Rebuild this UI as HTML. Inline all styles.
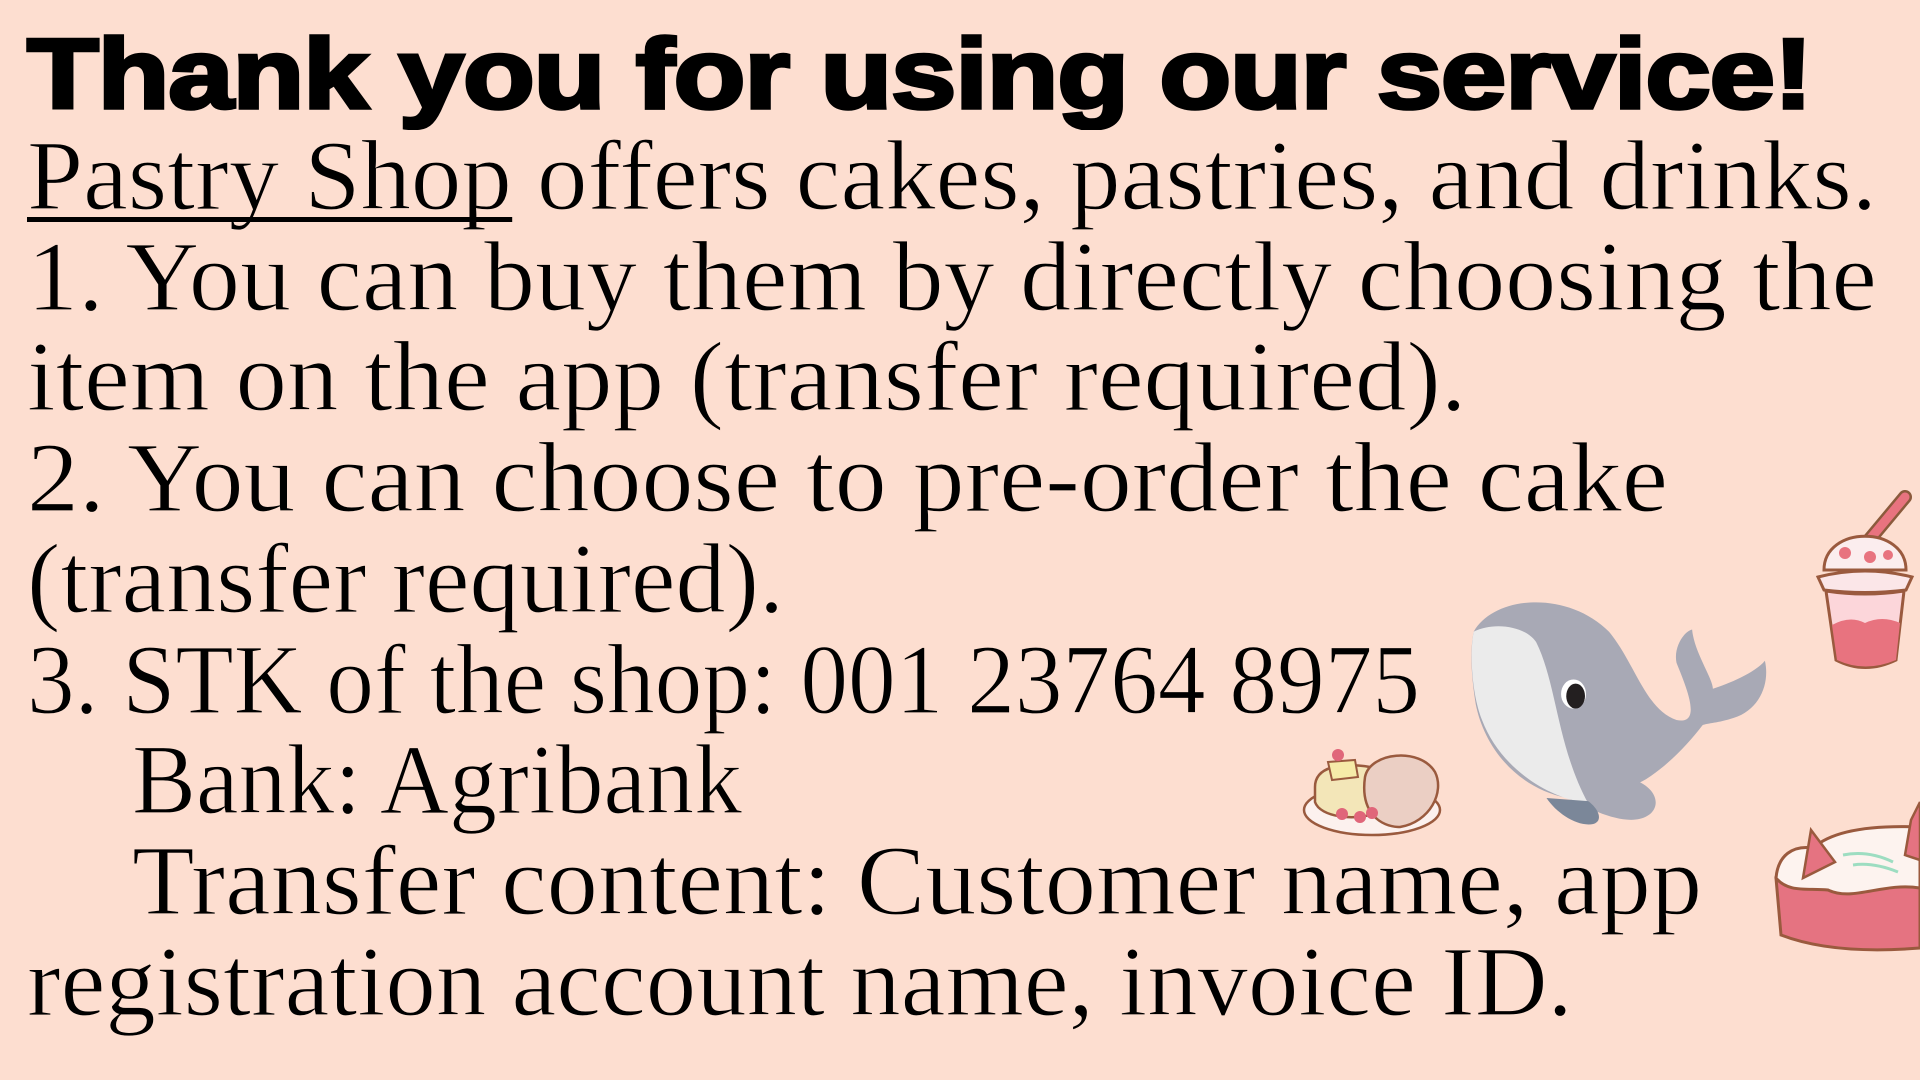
<!DOCTYPE html>
<html><head><meta charset="utf-8"><style>
html,body{margin:0;padding:0}
body{width:1920px;height:1080px;background:#FDDED0;position:relative;overflow:hidden}
.h{position:absolute;left:27px;top:26px;font:700 99px/96px "Liberation Sans",sans-serif;color:#000;white-space:nowrap;transform-origin:0 0;letter-spacing:-1px;-webkit-text-stroke:3.5px #000}
.ln{position:absolute;font:400 100px/100px "Liberation Serif",serif;color:#000;white-space:nowrap;transform-origin:0 0;-webkit-text-stroke:1.2px #FDDED0}
.u{position:relative}
.u::after{content:"";position:absolute;left:0;right:0;bottom:9px;height:5px;background:#000}
svg{position:absolute}
</style></head><body>
<div class="h" style="--w:1785">Thank you for using our service!</div>
<div class="ln" style="left:27px;top:126px;--w:1850"><span class="u">Pastry Shop</span> offers cakes, pastries, and drinks.</div>
<div class="ln" style="left:27px;top:227px;--w:1850">1. You can buy them by directly choosing the</div>
<div class="ln" style="left:27px;top:327px;--w:1439">item on the app (transfer required).</div>
<div class="ln" style="left:27px;top:428px;--w:1641">2. You can choose to pre-order the cake</div>
<div class="ln" style="left:27px;top:529px;--w:757">(transfer required).</div>
<div class="ln" style="left:27px;top:630px;--w:1393">3. STK of the shop: 001 23764 8975</div>
<div class="ln" style="left:132px;top:730px;--w:610">Bank: Agribank</div>
<div class="ln" style="left:132px;top:831px;--w:1570">Transfer content: Customer name, app</div>
<div class="ln" style="left:27px;top:932px;--w:1546">registration account name, invoice ID.</div>

<!-- whale -->
<svg style="left:1452px;top:590px" width="345" height="260" viewBox="0 0 330 250">
<path d="M20 40 C40 5 110 0 150 40 C175 70 185 115 215 125 C240 130 225 95 215 70 C212 55 222 40 230 38 C232 60 250 85 250 95 C265 90 290 80 300 68 C305 90 295 115 270 123 C255 128 245 128 240 130 C225 150 200 175 180 185 C200 195 200 215 180 220 C160 225 130 210 110 200 C60 190 30 150 22 110 C18 85 16 60 20 40Z" fill="#A8A9B5"/>
<path d="M20 40 C40 30 70 35 80 50 C100 90 100 150 130 205 C90 200 45 170 28 125 C18 100 16 60 20 40Z" fill="#EBEBEB"/>
<path d="M90 200 C100 215 120 228 135 225 C145 222 140 210 130 203Z" fill="#7B8799"/>
<ellipse cx="116" cy="100" rx="12" ry="14" fill="#fff"/>
<ellipse cx="118" cy="102" rx="9" ry="12" fill="#231F20"/>
</svg>
<!-- drink -->
<svg style="left:1810px;top:485px" width="110" height="190" viewBox="0 0 110 190">
<path d="M55 60 L95 12" stroke="#8B5A3C" stroke-width="14" stroke-linecap="round"/>
<path d="M55 60 L95 12" stroke="#E8737F" stroke-width="9" stroke-linecap="round"/>
<path d="M14 85 C14 40 96 40 96 85Z" fill="#FBEDEE" stroke="#9A5A3E" stroke-width="3"/>
<path d="M8 92 Q55 80 102 92 L96 105 Q55 110 14 105Z" fill="#FBE6E8" stroke="#9A5A3E" stroke-width="3"/>
<path d="M16 106 L26 175 Q55 190 86 175 L94 106 Q55 112 16 106Z" fill="#FCD6DA" stroke="#9A5A3E" stroke-width="3"/>
<path d="M22 140 Q40 130 55 138 Q72 130 90 138 L86 175 Q55 188 27 175Z" fill="#E8737F"/>
<circle cx="35" cy="68" r="6" fill="#E8737F"/><circle cx="60" cy="72" r="6" fill="#E8737F"/><circle cx="78" cy="70" r="5" fill="#E8737F"/>
</svg>
<!-- pancake -->
<svg style="left:1300px;top:742px" width="145" height="97" viewBox="0 0 145 97">
<ellipse cx="72" cy="68" rx="68" ry="25" fill="#FCF1EE" stroke="#9A5A3E" stroke-width="2.5"/>
<path d="M15 45 C15 25 40 20 70 25 L80 70 C55 80 20 75 15 60Z" fill="#F3E6B8" stroke="#9A5A3E" stroke-width="2.5"/>
<path d="M65 35 C70 10 120 5 135 30 C145 50 130 80 100 85 C80 85 60 70 65 35Z" fill="#EBCFC4" stroke="#9A5A3E" stroke-width="2.5"/>
<path d="M28 20 L55 18 L58 35 L32 38Z" fill="#F6EBA8" stroke="#9A5A3E" stroke-width="2"/>
<circle cx="38" cy="13" r="6" fill="#E0667A"/><circle cx="42" cy="72" r="6" fill="#E0667A"/><circle cx="60" cy="75" r="6" fill="#E0667A"/><circle cx="72" cy="71" r="6" fill="#E0667A"/>
</svg>
<!-- cake -->
<svg style="left:1773px;top:800px" width="147" height="155" viewBox="0 0 147 155">
<path d="M3 78 L8 135 Q60 155 147 148 L147 70Z" fill="#E57381" stroke="#9A5A3E" stroke-width="3"/>
<path d="M3 78 C5 55 20 45 40 48 C60 30 100 25 147 27 L147 88 C110 82 80 102 55 90 C35 88 15 93 3 78Z" fill="#FDF3EF" stroke="#9A5A3E" stroke-width="3"/>
<path d="M30 78 L38 30 L62 62Z" fill="#E57381" stroke="#9A5A3E" stroke-width="2.5"/>
<path d="M138 20 L147 2 L147 60 L132 55Z" fill="#E57381" stroke="#9A5A3E" stroke-width="2.5"/>
<path d="M70 55 Q95 50 120 62" stroke="#9DDDC1" stroke-width="3" fill="none"/>
<path d="M80 65 Q100 62 125 72" stroke="#9DDDC1" stroke-width="3" fill="none"/>
</svg>
<script>
document.querySelectorAll('.h,.ln').forEach(function(e){
 var w=parseFloat(getComputedStyle(e).getPropertyValue('--w'));
 var s=w/e.scrollWidth; e.style.transform='scaleX('+s+')';
});
</script>
</body></html>
